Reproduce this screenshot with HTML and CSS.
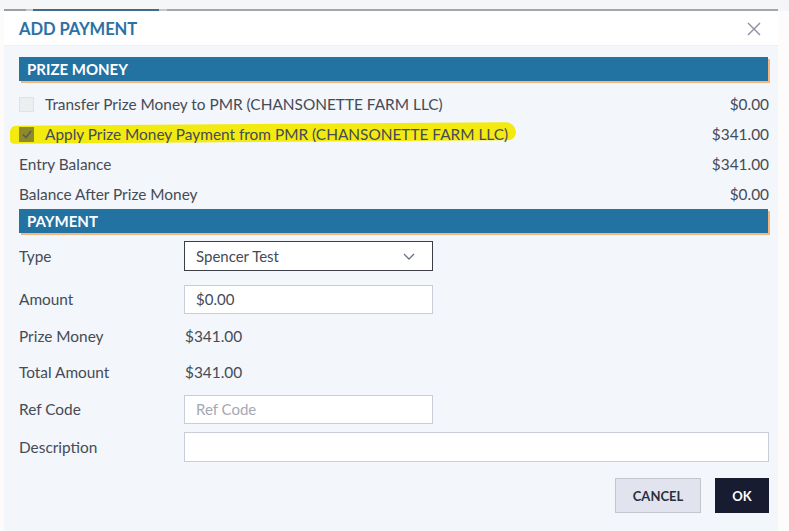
FILE: index.html
```html
<!DOCTYPE html>
<html>
<head>
<meta charset="utf-8">
<link rel="stylesheet" href="styles.css">
</head>
<body>
<div class="page">
  <div class="topstrip">
    <div class="tabs"><span class="seg s1"></span><span class="seg s2"></span><span class="seg s3"></span><span class="seg s4"></span><span class="seg s5"></span></div>
  </div>
  <div class="dialog">
    <div class="header">
      <h1 class="title">ADD PAYMENT</h1>
      <span class="close">
        <svg width="14" height="14" viewBox="0 0 14 14"><path d="M1 1L13 13M13 1L1 13" stroke="#8a8f9c" stroke-width="1.4" fill="none"/></svg>
      </span>
    </div>
    <div class="body">
      <div class="section">PRIZE MONEY</div>
      <div class="row">
        <label class="check"><span class="box"></span>Transfer Prize Money to PMR (CHANSONETTE FARM LLC)</label>
        <span class="amt">$0.00</span>
      </div>
      <div class="row hl-row">
        <span class="highlight"></span>
        <label class="check"><span class="box checked"><svg width="10" height="9" viewBox="0 0 10 9"><path d="M1 4.5L4 7.5L9 1" stroke="#5a5a5a" stroke-width="1.5" fill="none"/></svg></span>Apply Prize Money Payment from PMR (CHANSONETTE FARM LLC)</label>
        <span class="amt">$341.00</span>
      </div>
      <div class="row">
        <span>Entry Balance</span>
        <span class="amt">$341.00</span>
      </div>
      <div class="row">
        <span>Balance After Prize Money</span>
        <span class="amt">$0.00</span>
      </div>
      <div class="section s2">PAYMENT</div>
      <div class="form">
        <div class="frow r-type">
          <span class="lbl">Type</span>
          <div class="select">
            <span>Spencer Test</span>
            <svg width="12" height="7" viewBox="0 0 12 7"><path d="M1 1L6 6L11 1" stroke="#6b7080" stroke-width="1.3" fill="none"/></svg>
          </div>
        </div>
        <div class="frow r-amount">
          <span class="lbl">Amount</span>
          <div class="input">$0.00</div>
        </div>
        <div class="frow r-prize">
          <span class="lbl">Prize Money</span>
          <span class="val">$341.00</span>
        </div>
        <div class="frow r-total">
          <span class="lbl">Total Amount</span>
          <span class="val">$341.00</span>
        </div>
        <div class="frow r-ref">
          <span class="lbl">Ref Code</span>
          <div class="input ph">Ref Code</div>
        </div>
        <div class="frow r-desc">
          <span class="lbl">Description</span>
          <div class="input wide"></div>
        </div>
      </div>
      <div class="actions">
        <button class="btn cancel">CANCEL</button>
        <button class="btn ok">OK</button>
      </div>
    </div>
  </div>
</div>
</body>
</html>
```

FILE: styles.css
```css
* { box-sizing: border-box; }
html, body { margin: 0; padding: 0; }
body {
  width: 789px;
  height: 531px;
  overflow: hidden;
  background: #fdfcfb;
  font-family: Lato, "Open Sans", sans-serif;
  color: #454b57;
}
.page { width: 789px; }
.topstrip {
  height: 11px;
  background: #f5f6f7;
  padding-left: 4px;
  display: flex;
  align-items: flex-end;
}
.tabs { display: flex; width: 774px; height: 2px; }
.seg { height: 2px; display: block; }
.s1 { width: 22px; background: #9b9ea3; }
.s2 { width: 7px; background: #c5c8cc; }
.s3 { width: 126px; background: #3e6a8c; }
.s4 { width: 8px; background: #c5c8cc; }
.s5 { flex: 1; background: #a3a6aa; }
.dialog {
  margin-left: 4px;
  width: 774px;
  height: 520px;
  background: #f3f6fa;
}
.header {
  height: 35px;
  background: #ffffff;
  border-bottom: 1px solid #eceff3;
  display: flex;
  align-items: center;
  justify-content: space-between;
  padding: 0 17px 0 15px;
}
.title {
  margin: 0;
  font-size: 16.6px;
  font-weight: 700;
  color: #2a72a6;
  letter-spacing: -0.1px;
  padding-top: 1px;
}
.close { display: flex; margin-top: 2px; }
.body { padding: 11px 9px 0 15px; }
.section {
  height: 24px;
  background: #2272a2;
  color: #fff;
  font-weight: 700;
  font-size: 15px;
  line-height: 24px;
  padding-left: 8px;
  width: 749px;
  box-shadow: 2px 2px 0 #f6b47e;
}
.row {
  position: relative;
  height: 30px;
  display: flex;
  align-items: center;
  justify-content: space-between;
  font-size: 15.4px;
}
.section + .row { margin-top: 8px; }
.amt { text-align: right; }
.check { display: flex; align-items: center; position: relative; z-index: 1; }
.box {
  width: 15px;
  height: 15px;
  border: 1px solid #e0e2e6;
  background: #eceef0;
  margin-right: 11px;
  display: flex;
  align-items: center;
  justify-content: center;
}
.hl-row .amt { position: relative; z-index: 1; }
.highlight {
  position: absolute;
  left: -9px;
  top: 5px;
  width: 506px;
  height: 18px;
  background: #f3ea10;
  border-radius: 6px 10px 8px 4px;
  transform: rotate(-0.4deg);
  z-index: 0;
}
.hl-row .box.checked { background: #8d8a2a; border-color: #8d8a2a; }
.form { padding-top: 8px; }
.frow {
  display: flex;
  align-items: center;
  font-size: 15.4px;
}
.lbl { width: 165px; flex: none; }
.r-type { height: 30px; }
.r-amount { height: 30px; margin-top: 13px; }
.r-prize { height: 30px; margin-top: 7px; }
.r-total { height: 30px; margin-top: 6px; }
.r-ref { height: 30px; margin-top: 7px; }
.r-desc { height: 30px; margin-top: 8px; }
.select {
  width: 249px;
  height: 30px;
  border: 1px solid #3b3e45;
  background: #fff;
  display: flex;
  align-items: center;
  justify-content: space-between;
  padding: 0 17px 0 11px;
  font-size: 15px;
}
.input {
  width: 249px;
  height: 29px;
  border: 1px solid #c9cdd8;
  background: #fff;
  display: flex;
  align-items: center;
  padding-left: 11px;
  font-size: 15px;
}
.input.ph { color: #a4a8b4; }
.input.wide { width: 585px; height: 30px; }
.val { padding-left: 1px; }
.actions {
  display: flex;
  justify-content: flex-end;
  gap: 14px;
  margin-top: 16px;
  width: 750px;
}
.btn {
  font-family: Lato, "Open Sans", sans-serif;
  font-weight: 700;
  font-size: 13px;
  height: 35px;
  border-radius: 0;
  cursor: pointer;
}
.cancel {
  width: 86px;
  background: #e1e4ef;
  border: 1px solid #c3c6cf;
  color: #2b2f3a;
}
.ok {
  width: 54px;
  background: #181c30;
  border: none;
  color: #fff;
}
```
